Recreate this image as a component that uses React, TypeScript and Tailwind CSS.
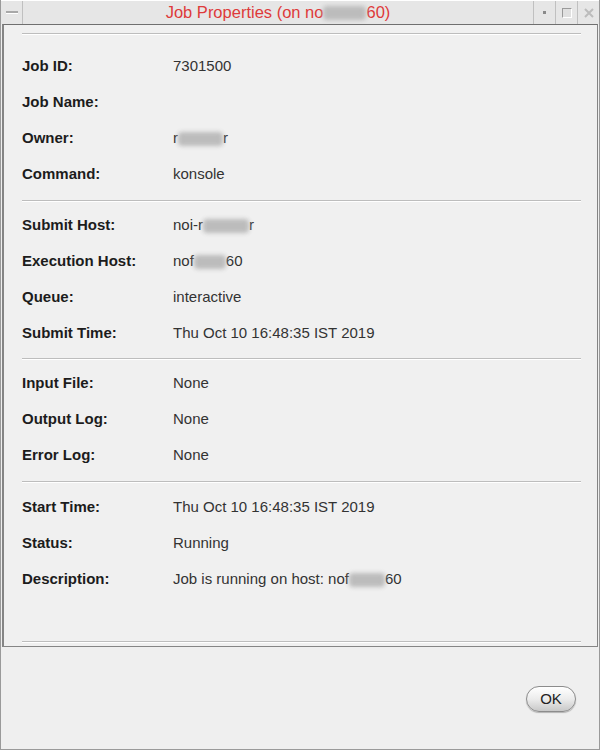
import React from "react";

const Blur = ({ w }: { w: number }) => (
  <span
    className="inline-block h-[14px] align-middle bg-[#bcbcbc] blur-[2px] rounded-sm"
    style={{ width: w }}
  />
);

const Sep = ({ className }: { className: string }) => (
  <div className={`h-[2px] border-t border-[#bdbdbd] border-b border-b-white ${className}`} />
);

type Row = { label: string; value: React.ReactNode };

const Rows = ({ rows }: { rows: Row[] }) => (
  <div className="flex flex-col">
    {rows.map((r) => (
      <div key={r.label} className="flex h-[36px] items-center text-[15px]">
        <div className="w-[151px] font-bold text-[#1c1c1c]">{r.label}</div>
        <div className="text-[#333] whitespace-nowrap">{r.value}</div>
      </div>
    ))}
  </div>
);

export default function App() {
  const s1: Row[] = [
    { label: "Job ID:", value: "7301500" },
    { label: "Job Name:", value: "" },
    {
      label: "Owner:",
      value: (
        <span>
          r<Blur w={45} />r
        </span>
      ),
    },
    { label: "Command:", value: "konsole" },
  ];
  const s2: Row[] = [
    {
      label: "Submit Host:",
      value: (
        <span>
          noi-r<Blur w={46} />r
        </span>
      ),
    },
    {
      label: "Execution Host:",
      value: (
        <span>
          nof<Blur w={32} />60
        </span>
      ),
    },
    { label: "Queue:", value: "interactive" },
    { label: "Submit Time:", value: "Thu Oct 10 16:48:35 IST 2019" },
  ];
  const s3: Row[] = [
    { label: "Input File:", value: "None" },
    { label: "Output Log:", value: "None" },
    { label: "Error Log:", value: "None" },
  ];
  const s4: Row[] = [
    { label: "Start Time:", value: "Thu Oct 10 16:48:35 IST 2019" },
    { label: "Status:", value: "Running" },
    {
      label: "Description:",
      value: (
        <span>
          Job is running on host: nof<Blur w={36} />60
        </span>
      ),
    },
  ];

  return (
    <div
      className="w-[600px] h-[750px] bg-[#efefef] flex flex-col border-l border-r border-b border-[#9a9a9a]"
      style={{ fontFamily: '"Liberation Sans", Arial, sans-serif' }}
    >
      {/* Title bar */}
      <div className="h-[24px] flex items-stretch bg-[#e6e6e6] border-t border-white">
        <div className="w-[22px] flex items-center justify-center border-r border-[#c0c0c0]">
          <div className="w-[12px] h-[3px] bg-[#a8a8a8] border-b border-white" />
        </div>
        <div className="flex-1 flex items-center justify-center text-[16.5px] text-[#de3a3a] whitespace-nowrap">
          Job Properties (on no<Blur w={43} />60)
        </div>
        <div className="w-[22px] flex items-center justify-center border-l border-[#c0c0c0]">
          <div className="w-[3px] h-[3px] bg-[#8a8a8a]" />
        </div>
        <div className="w-[22px] flex items-center justify-center border-l border-[#c0c0c0]">
          <div className="w-[10px] h-[10px] border border-[#9a9a9a] border-r-white border-b-white bg-[#e0e0e0]" />
        </div>
        <div className="w-[22px] flex items-center justify-center border-l border-[#c0c0c0]">
          <svg width="12" height="12" viewBox="0 0 12 12">
            <path d="M2 2 L10 10 M10 2 L2 10" stroke="#bcbcbc" strokeWidth="2" fill="none" />
          </svg>
        </div>
      </div>

      {/* Properties panel */}
      <div className="mx-[1px] h-[623px] border border-l-2 border-[#858585] border-t-[#6f6f6f] bg-[#f0f0f0] pl-[18px] pr-[16px] pt-[8px] flex flex-col">
        <Sep className="" />
        <div className="mt-[13px]">
          <Rows rows={s1} />
        </div>
        <Sep className="mt-[8px]" />
        <div className="mt-[5px]">
          <Rows rows={s2} />
        </div>
        <Sep className="mt-[7px]" />
        <div className="mt-[5px]">
          <Rows rows={s3} />
        </div>
        <Sep className="mt-[8px]" />
        <div className="mt-[6px]">
          <Rows rows={s4} />
        </div>
        <Sep className="mt-[44px]" />
      </div>

      {/* Button area */}
      <div className="flex-1 flex justify-end items-start pt-[39px] pr-[23px]">
        <button className="w-[50px] h-[26px] rounded-full border border-[#8c8c8c] bg-gradient-to-b from-white via-[#ececec] to-[#c8c8c8] text-[15px] text-[#222] flex items-center justify-center shadow-[0_1px_1px_rgba(0,0,0,0.25)]">
          OK
        </button>
      </div>
    </div>
  );
}
